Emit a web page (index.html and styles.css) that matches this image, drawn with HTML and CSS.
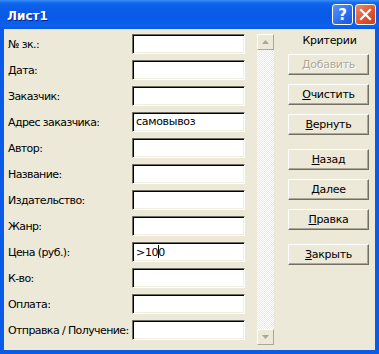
FILE: index.html
```html
<!DOCTYPE html>
<html lang="ru">
<head>
    <meta charset="UTF-8">
    <title>Лист1</title>
    <link rel="stylesheet" href="styles.css">
</head>
<body>
    <div class="window">
        <div class="titlebar">
            <span class="title">Лист1</span>
            <div class="controls">
                <span class="tb-btn help">?</span>
                <span class="tb-btn close">
                    <svg width="13" height="13" viewBox="0 0 13 13"><path d="M2 2 L11 11 M11 2 L2 11" stroke="#fff" stroke-width="2.2" stroke-linecap="square"/></svg>
                </span>
            </div>
        </div>
        <div class="client">
            <div class="fields">
                <div class="row"><span class="label">№ зк.:</span><div class="box"></div></div>
                <div class="row"><span class="label">Дата:</span><div class="box"></div></div>
                <div class="row"><span class="label">Заказчик:</span><div class="box"></div></div>
                <div class="row"><span class="label">Адрес заказчика:</span><div class="box">самовывоз</div></div>
                <div class="row"><span class="label">Автор:</span><div class="box"></div></div>
                <div class="row"><span class="label">Название:</span><div class="box"></div></div>
                <div class="row"><span class="label">Издательство:</span><div class="box"></div></div>
                <div class="row"><span class="label">Жанр:</span><div class="box"></div></div>
                <div class="row"><span class="label">Цена (руб.):</span><div class="box">&gt;10<span class="caret"></span>0</div></div>
                <div class="row"><span class="label">К-во:</span><div class="box"></div></div>
                <div class="row"><span class="label">Оплата:</span><div class="box"></div></div>
                <div class="row"><span class="label">Отправка / Получение:</span><div class="box"></div></div>
            </div>
            <div class="scrollbar">
                <div class="sb-btn">
                    <svg width="7" height="4" viewBox="0 0 7 4"><path d="M0 4 L3.5 0 L7 4 Z" fill="#aca899"/></svg>
                </div>
                <div class="track"></div>
                <div class="sb-btn">
                    <svg width="7" height="4" viewBox="0 0 7 4"><path d="M0 0 L3.5 4 L7 0 Z" fill="#aca899"/></svg>
                </div>
            </div>
            <div class="actions">
                <div class="caption">Критерии</div>
                <button class="btn" disabled>Добавить</button>
                <button class="btn"><u>О</u>чистить</button>
                <button class="btn"><u>В</u>ернуть</button>
                <button class="btn group"><u>Н</u>азад</button>
                <button class="btn"><u>Д</u>алее</button>
                <button class="btn"><u>П</u>равка</button>
                <button class="btn group"><u>З</u>акрыть</button>
            </div>
        </div>
    </div>
</body>
</html>
```

FILE: styles.css
```css
body {
    margin: 0;
    padding: 0;
    font-family: "DejaVu Sans", Verdana, sans-serif;
    font-size: 11px;
    background-color: #0054e3;
}
.window {
    width: 379px;
    height: 354px;
    box-sizing: border-box;
    display: flex;
    flex-direction: column;
    background-color: #0058ee;
    border-left: 4px solid #0a5ce8;
    border-right: 4px solid #0a5ce8;
    border-bottom: 4px solid #0a5ce8;
}
.titlebar {
    height: 29px;
    margin: 0 -4px;
    padding: 0 3px 0 7px;
    display: flex;
    align-items: center;
    justify-content: space-between;
    background: linear-gradient(#3c8cf8 0, #1068ee 3px, #0a5ee8 8px, #0958e6 60%, #0c62ee 90%, #0a56e0 100%);
}
.title {
    color: #fff;
    font-weight: bold;
    font-size: 12px;
    text-shadow: 1px 1px 0 #0a1e8a;
    margin-top: 2px;
}
.controls {
    display: flex;
    gap: 2px;
}
.tb-btn {
    width: 21px;
    height: 21px;
    box-sizing: border-box;
    border: 1px solid #fff;
    border-radius: 3px;
    display: flex;
    align-items: center;
    justify-content: center;
    color: #fff;
    font-weight: bold;
    font-size: 15px;
}
.help {
    background: linear-gradient(135deg, #5a94f8, #2a6cf0 60%, #1a55d8);
}
.close {
    background: linear-gradient(135deg, #f08a6a, #e0502e 60%, #c8401e);
}
.client {
    flex: 1;
    display: flex;
    background-color: #ece9d8;
    padding: 5px 0 0 4px;
}
.fields {
    display: flex;
    flex-direction: column;
    gap: 6px;
}
.row {
    display: flex;
    align-items: center;
    height: 20px;
}
.label {
    width: 124px;
    color: #000;
    white-space: nowrap;
    letter-spacing: -0.6px;
}
.box {
    width: 113px;
    height: 20px;
    box-sizing: border-box;
    background-color: #fff;
    border: 1px solid;
    border-color: #716f64 #fff #fff #716f64;
    box-shadow: inset 1px 1px 0 #000, inset -1px -1px 0 #f1efe2;
    padding: 2px 0 0 3px;
    color: #000;
    letter-spacing: -0.3px;
}
.caret {
    display: inline-block;
    width: 1px;
    height: 13px;
    background-color: #000;
    vertical-align: -2px;
    margin-right: -1px;
}
.scrollbar {
    margin-left: 12px;
    width: 17px;
    height: 311px;
    display: flex;
    flex-direction: column;
}
.sb-btn {
    height: 16px;
    box-sizing: border-box;
    background-color: #ece9d8;
    border: 1px solid;
    border-color: #fff #aca899 #aca899 #fff;
    display: flex;
    align-items: center;
    justify-content: center;
}
.track {
    flex: 1;
    background: repeating-conic-gradient(#fff 0 25%, #ece9d8 0 50%) 0 0 / 2px 2px;
}
.actions {
    margin-left: 14px;
    width: 81px;
    display: flex;
    flex-direction: column;
    gap: 9px;
}
.caption {
    height: 20px;
    line-height: 14px;
    text-align: center;
    color: #000;
    margin-bottom: -9px;
    padding-left: 2px;
    letter-spacing: -0.3px;
}
.btn {
    height: 21px;
    box-sizing: border-box;
    background-color: #ece9d8;
    border: 1px solid;
    border-color: #fff #716f64 #716f64 #fff;
    box-shadow: inset -1px -1px 0 #aca899;
    font-family: inherit;
    font-size: 11px;
    letter-spacing: -0.3px;
    color: #000;
    padding: 0;
}
.btn u {
    text-underline-offset: 1px;
}
.btn:disabled {
    color: #aca899;
    text-shadow: 1px 1px 0 #fff;
}
.group {
    margin-top: 5px;
}
```
